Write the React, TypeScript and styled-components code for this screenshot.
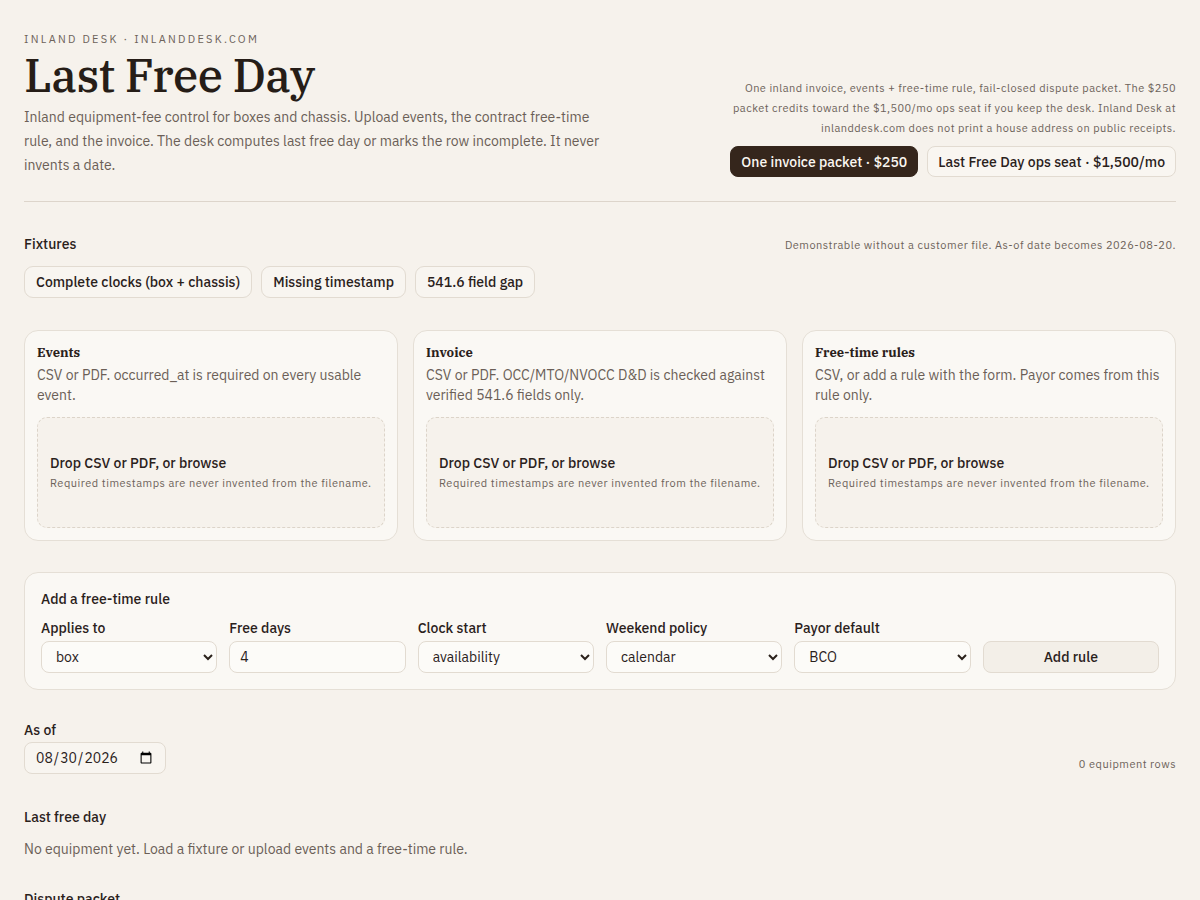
import React, { useState } from 'react';
import styled, { createGlobalStyle } from 'styled-components';

const sans = `"IBM Plex Sans", Roboto, "Liberation Sans", sans-serif`;
const serif = `"IBM Plex Serif", "DejaVu Serif", "Liberation Serif", serif`;

const GlobalStyle = createGlobalStyle`
  * { box-sizing: border-box; }
  body {
    margin: 0;
    background: #f6f2ec;
    color: #2a211b;
    font-family: ${sans};
  }
`;

const Page = styled.div`
  padding: 32px 24px 40px;
`;

const Header = styled.header`
  display: flex;
  justify-content: space-between;
  align-items: flex-end;
  gap: 32px;
  padding-bottom: 24px;
  border-bottom: 1px solid #ddd5cb;
`;

const Intro = styled.div`
  max-width: 582px;
`;

const Eyebrow = styled.div`
  font-size: 11px;
  letter-spacing: 2.25px;
  color: #6d625a;
  text-transform: uppercase;
`;

const Title = styled.h1`
  font-family: ${serif};
  font-weight: 500;
  font-size: 46px;
  line-height: 1;
  letter-spacing: -0.5px;
  margin: 6px 0 7px;
  color: #261d17;
`;

const Lead = styled.p`
  margin: 0;
  font-size: 14px;
  line-height: 24px;
  color: #6b5f57;
`;

const Offer = styled.div`
  display: flex;
  flex-direction: column;
  align-items: flex-end;
  max-width: 452px;
`;

const Fine = styled.p`
  margin: 0 0 8px;
  font-size: 11px;
  line-height: 20px;
  letter-spacing: 0.45px;
  color: #6d625a;
  text-align: right;
`;

const Buttons = styled.div`
  display: flex;
  gap: 9px;
`;

const PriceButton = styled.button<{ $primary?: boolean }>`
  font-family: ${sans};
  font-size: 14px;
  font-weight: 500;
  height: 31px;
  padding: 0 10px;
  border-radius: 8px;
  border: 1px solid ${p => (p.$primary ? '#35261c' : '#e2dbd1')};
  background: ${p => (p.$primary ? '#35261c' : '#f9f6f1')};
  color: ${p => (p.$primary ? '#fbf7f1' : '#2a211b')};
  cursor: pointer;
`;

const Section = styled.section<{ $gap?: number }>`
  margin-top: ${p => p.$gap ?? 32}px;
`;

const SectionHead = styled.div`
  display: flex;
  justify-content: space-between;
  align-items: baseline;
`;

const Label = styled.div`
  font-size: 14px;
  font-weight: 500;
  color: #2a211b;
`;

const Note = styled.div`
  font-size: 11px;
  letter-spacing: 0.5px;
  color: #6d625a;
`;

const Chips = styled.div`
  display: flex;
  gap: 9px;
  margin-top: 13px;
`;

const Chip = styled.button`
  font-family: ${sans};
  font-size: 14px;
  font-weight: 500;
  height: 32px;
  padding: 0 11px;
  border-radius: 9px;
  border: 1px solid #e2dbd1;
  background: #f8f5f0;
  color: #2a211b;
  cursor: pointer;
`;

const Panels = styled.div`
  display: grid;
  grid-template-columns: repeat(3, 1fr);
  gap: 15px;
  margin-top: 32px;
`;

const Panel = styled.div`
  background: #faf8f4;
  border: 1px solid #e5dfd6;
  border-radius: 14px;
  padding: 13px 12px 12px;
`;

const PanelTitle = styled.h3`
  font-family: ${serif};
  font-size: 13px;
  font-weight: 700;
  margin: 0 0 4px;
  color: #2a211b;
`;

const PanelText = styled.p`
  margin: 0;
  font-size: 14px;
  line-height: 20px;
  color: #6b5f57;
  min-height: 40px;
`;

const Drop = styled.div`
  margin-top: 12px;
  height: 111px;
  border: 1px dashed #dcd4c9;
  border-radius: 10px;
  background: #f6f2ec;
  padding: 0 12px 2px;
  display: flex;
  flex-direction: column;
  justify-content: center;
  gap: 4px;
`;

const DropTitle = styled.div`
  font-size: 14px;
  font-weight: 500;
  color: #2a211b;
`;

const DropHint = styled.div`
  font-size: 11px;
  letter-spacing: 0.5px;
  color: #6d625a;
`;

const FormCard = styled.form`
  margin-top: 31px;
  background: #faf8f4;
  border: 1px solid #e5dfd6;
  border-radius: 14px;
  padding: 17px 16px 16px;
`;

const Fields = styled.div`
  display: grid;
  grid-template-columns: repeat(6, 1fr);
  gap: 12px;
  margin-top: 11px;
  align-items: end;
`;

const Field = styled.label`
  display: flex;
  flex-direction: column;
  gap: 4px;
  font-size: 14px;
  font-weight: 500;
  color: #2a211b;
`;

const controlCss = `
  height: 32px;
  font-family: ${sans};
  font-size: 14px;
  color: #2a211b;
  background: #fcfbf8;
  border: 1px solid #e2dbd1;
  border-radius: 8px;
  padding: 0 10px;
  width: 100%;
`;

const Select = styled.select`
  ${controlCss}
`;

const Input = styled.input`
  ${controlCss}
`;

const SubmitButton = styled.button`
  ${controlCss}
  background: #f3efe8;
  font-weight: 500;
  cursor: pointer;
`;

const AsOfRow = styled.div`
  display: flex;
  justify-content: space-between;
  align-items: flex-end;
  margin-top: 31px;
`;

const DateInput = styled.input`
  ${controlCss}
  width: 142px;
  margin-top: 3px;
  background: #f8f5f0;
`;

const RowCount = styled(Note)`
  padding-bottom: 3px;
`;

const Empty = styled.p`
  margin: 14px 0 0;
  font-size: 14px;
  color: #6b5f57;
`;

const panels = [
  { title: 'Events', text: 'CSV or PDF. occurred_at is required on every usable event.' },
  { title: 'Invoice', text: 'CSV or PDF. OCC/MTO/NVOCC D&D is checked against verified 541.6 fields only.' },
  { title: 'Free-time rules', text: 'CSV, or add a rule with the form. Payor comes from this rule only.' },
];

export default function App() {
  const [freeDays, setFreeDays] = useState('4');
  const [asOf, setAsOf] = useState('2026-08-30');

  return (
    <Page>
      <GlobalStyle />
      <Header>
        <Intro>
          <Eyebrow>Inland Desk · inlanddesk.com</Eyebrow>
          <Title>Last Free Day</Title>
          <Lead>
            Inland equipment-fee control for boxes and chassis. Upload events, the contract free-time
            rule, and the invoice. The desk computes last free day or marks the row incomplete. It never
            invents a date.
          </Lead>
        </Intro>
        <Offer>
          <Fine>
            One inland invoice, events + free-time rule, fail-closed dispute packet. The $250 packet
            credits toward the $1,500/mo ops seat if you keep the desk. Inland Desk at inlanddesk.com
            does not print a house address on public receipts.
          </Fine>
          <Buttons>
            <PriceButton $primary>One invoice packet · $250</PriceButton>
            <PriceButton>Last Free Day ops seat · $1,500/mo</PriceButton>
          </Buttons>
        </Offer>
      </Header>

      <Section $gap={33}>
        <SectionHead>
          <Label>Fixtures</Label>
          <Note>Demonstrable without a customer file. As-of date becomes 2026-08-20.</Note>
        </SectionHead>
        <Chips>
          <Chip>Complete clocks (box + chassis)</Chip>
          <Chip>Missing timestamp</Chip>
          <Chip>541.6 field gap</Chip>
        </Chips>
      </Section>

      <Panels>
        {panels.map(p => (
          <Panel key={p.title}>
            <PanelTitle>{p.title}</PanelTitle>
            <PanelText>{p.text}</PanelText>
            <Drop>
              <DropTitle>Drop CSV or PDF, or browse</DropTitle>
              <DropHint>Required timestamps are never invented from the filename.</DropHint>
            </Drop>
          </Panel>
        ))}
      </Panels>

      <FormCard onSubmit={e => e.preventDefault()}>
        <Label>Add a free-time rule</Label>
        <Fields>
          <Field>
            Applies to
            <Select defaultValue="box">
              <option>box</option>
              <option>chassis</option>
            </Select>
          </Field>
          <Field>
            Free days
            <Input value={freeDays} onChange={e => setFreeDays(e.target.value)} />
          </Field>
          <Field>
            Clock start
            <Select defaultValue="availability">
              <option>availability</option>
              <option>discharge</option>
            </Select>
          </Field>
          <Field>
            Weekend policy
            <Select defaultValue="calendar">
              <option>calendar</option>
              <option>business</option>
            </Select>
          </Field>
          <Field>
            Payor default
            <Select defaultValue="BCO">
              <option>BCO</option>
              <option>MTO</option>
            </Select>
          </Field>
          <SubmitButton type="submit">Add rule</SubmitButton>
        </Fields>
      </FormCard>

      <AsOfRow>
        <div>
          <Label>As of</Label>
          <DateInput type="date" value={asOf} onChange={e => setAsOf(e.target.value)} />
        </div>
        <RowCount>0 equipment rows</RowCount>
      </AsOfRow>

      <Section $gap={34}>
        <Label>Last free day</Label>
        <Empty>No equipment yet. Load a fixture or upload events and a free-time rule.</Empty>
      </Section>

      <Section>
        <Label>Dispute packet</Label>
      </Section>
    </Page>
  );
}
